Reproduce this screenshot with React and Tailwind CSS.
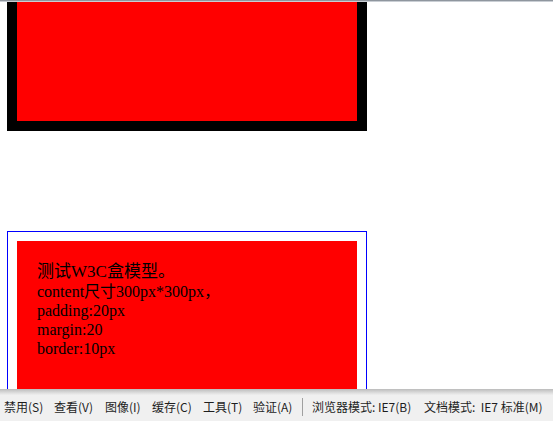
export default function App() {
  const menus = [
    { label: "禁用(S)", w: "w-[50px]" },
    { label: "查看(V)", w: "w-[51px]" },
    { label: "图像(I)", w: "w-[47px]" },
    { label: "缓存(C)", w: "w-[51px]" },
    { label: "工具(T)", w: "w-[50px]" },
    { label: "验证(A)", w: "w-[49px]" },
  ];

  return (
    <div className="flex h-[421px] w-[553px] flex-col overflow-hidden bg-white">
      {/* window top edge */}
      <div className="h-[1px] bg-[#8f969e]" />
      <div className="h-[1px] bg-[#c9ced4]" />

      {/* scrolled page */}
      <div className="flex-1 overflow-hidden font-['Liberation_Serif','Noto_Sans_CJK_SC',serif] text-[16px] text-black">
        <div className="-mt-[231px] pl-[7px]">
          <div className="h-[360px] w-[360px] border-[10px] border-black bg-[#ff0000]" />
          <div className="mt-[100px] w-[360px] border border-[#0000ff] p-[9px]">
            <div className="h-[340px] w-[340px] bg-[#ff0000] p-[20px] leading-[19px]">
              <p className="text-[17px] leading-[21px]">测试W3C盒模型。</p>
              <p>content尺寸300px*300px，</p>
              <p>padding:20px</p>
              <p>margin:20</p>
              <p>border:10px</p>
            </div>
          </div>
        </div>
      </div>

      {/* developer toolbar */}
      <div className="h-[32px] bg-gradient-to-b from-[#bcbcbc] via-[#e6e6e6] via-[15%] to-[#f0f0f0] to-[20%] font-['Noto_Sans_CJK_SC','Noto_Sans',sans-serif] text-[12px] text-[#1e1e1e]">
        <div className="flex h-full items-center pl-[4px] pt-[4px]">
          {menus.map((m) => (
            <span key={m.label} className={`${m.w} shrink-0 whitespace-nowrap`}>
              {m.label}
            </span>
          ))}
          <span className="mr-[9px] h-[18px] w-[1px] shrink-0 bg-[#a0a0a0]" />
          <span className="w-[112px] shrink-0 whitespace-nowrap">浏览器模式: IE7(B)</span>
          <span className="whitespace-nowrap">文档模式:&nbsp; IE7 标准(M)</span>
        </div>
      </div>
    </div>
  );
}
